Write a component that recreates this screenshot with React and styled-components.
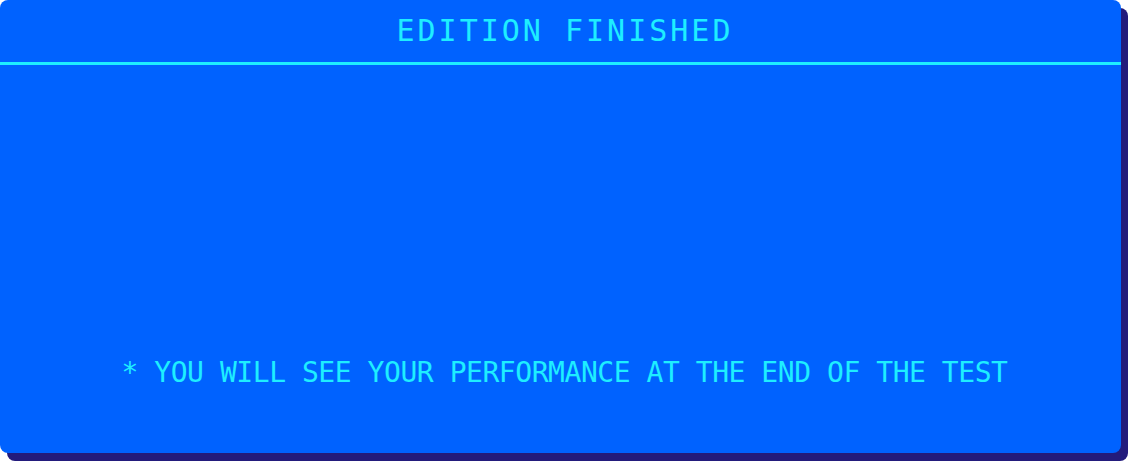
import React from 'react';
import styled, { createGlobalStyle } from 'styled-components';

const App = () => {
  return (
    <>
      <GlobalStyles />
      <Page>
        <Card>
          <Header>
            <Title>EDITION FINISHED</Title>
          </Header>
          <Body>
            <Note>* YOU WILL SEE YOUR PERFORMANCE AT THE END OF THE TEST</Note>
          </Body>
        </Card>
      </Page>
    </>
  )
}

export default App

const Page = styled.div`
  width: 1128px;
  height: 461px;
  background: #fff;
`

const Card = styled.div`
  width: 1121px;
  height: 453px;
  background: #0062ff;
  border-radius: 8px;
  box-shadow: 7px 8px 0 #231b7c;
  display: flex;
  flex-direction: column;
  color: #1eeeff;
  font-family: 'DejaVu Sans Mono', 'Liberation Mono', monospace;
`

const Header = styled.div`
  height: 65px;
  flex-shrink: 0;
  border-bottom: 3px solid #1eeeff;
  display: flex;
  justify-content: center;
  align-items: center;
`

const Title = styled.h1`
  font-size: 30px;
  line-height: 1;
  font-weight: normal;
  letter-spacing: 3px;
  padding-left: 3px;
  transform: translateX(3px);
`

const Body = styled.div`
  flex: 1;
  display: flex;
  justify-content: center;
  align-items: flex-end;
  padding-bottom: 66px;
`

const Note = styled.p`
  font-size: 28px;
  line-height: 1;
  letter-spacing: -0.45px;
  transform: translateX(4px);
`

const GlobalStyles = createGlobalStyle`
* {
  margin: 0;
  padding: 0;
  box-sizing: border-box;
}
body {
  background: #fff;
}
`
